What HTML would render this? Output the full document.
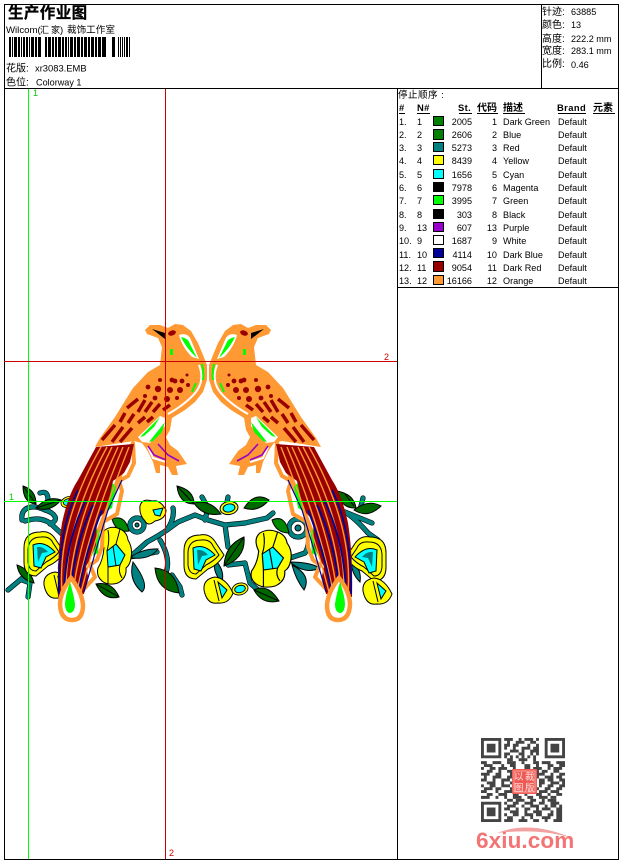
<!DOCTYPE html>
<html><head><meta charset="utf-8">
<style>
html,body{margin:0;padding:0;background:#fff;width:620px;height:860px;overflow:hidden}
svg{position:absolute;left:0;top:0;display:block}
text{font-family:"Liberation Sans","WenQuanYi Zen Hei","Noto Sans CJK SC",sans-serif;font-size:9.1px;fill:#000}
.r{text-anchor:end}
.b{font-weight:bold;letter-spacing:.4px;font-size:9.4px}
.c{font-size:10px}
</style></head><body>
<svg width="620" height="860" viewBox="0 0 620 860" xmlns="http://www.w3.org/2000/svg">
<defs>
<g id="fa" stroke="#000" stroke-width="1">
<path fill="#ff0" d="M24 548Q24 532 40 532Q50 530 56 540L64 552Q58 562 48 566L36 576Q24 576 24 562Z"/>
<path fill="none" d="M28 549Q29 537 41 537Q50 536 53 543L59 552Q54 558 46 562L36 571Q29 571 28 562Z"/>
<path fill="#0ff" d="M33 545Q44 540 55 552L46 557L41 568L34 566Z"/>
<path fill="#008080" stroke="none" d="M37 547Q43 546 48 552L42 553L38 562Z"/>
</g>
<g id="fb" stroke="#000" stroke-width="1">
<path fill="#ff0" d="M105 530Q112 525 120 529Q127 532 128 540Q133 548 131 558Q130 565 126 568Q127 578 118 583Q108 586 102 581Q96 576 98 568Q103 560 104 548Q99 536 105 530Z"/>
<path fill="#0ff" d="M107 551L116 544L125 555L120 565L108 567Z"/>
<path fill="none" d="M113 546L116 566M108 567Q108 575 108 584M120 565Q118 572 122 578M108 530Q110 540 107 551M120 529Q118 537 116 544"/>
</g>
<g id="fc" stroke="#000" stroke-width="1">
<path fill="#ff0" d="M204 590Q203 579 215 577Q226 578 233 593Q229 604 218 603Q207 605 204 590Z"/>
<path fill="#0ff" d="M218 582L227 590L222 598Z"/>
<path fill="none" d="M214 580L219 601"/>
</g>
<g id="bud" stroke="#000" stroke-width="1">
<ellipse cx="0" cy="0" rx="9" ry="6.5" fill="#ff0"/>
<ellipse cx="0" cy="0" rx="6" ry="4" fill="#0ff"/>
</g>
<g id="body">
<path fill="#f93" d="M145 330L150 325L160 325L168 328L175 324L183 325L191 331L198 343L203 355L207 365L207 380L203 392L195 402L185 410L172 418L170 430L166 437L170 445L178 451L187 464L176 466L178 475L172 475L168 467L160 465L160 473L156 473L153 462L147 450L142 443L134 441L95 447L100 438L115 417L133 388L148 372L160 365L162 347L158 338L147 334Z"/>
<path fill="#000" d="M152 329L165 333L165 339Z"/>
<ellipse cx="172" cy="333" rx="4" ry="2.5" fill="#900" transform="rotate(-20 172 333)"/>
<path fill="#fff" d="M179 335Q188 332 191 340L199 359L192 357Q182 347 179 335Z"/>
<path fill="#0f0" d="M181 337Q188 338 190 344L197 358Q186 348 181 337Z"/>
<path fill="#0f0" d="M170 349L173 349L173 355L170 355Z"/>
<path fill="none" stroke="#fff" stroke-width="2" d="M199 365Q205 380 196 392Q186 404 168 414"/>
<path fill="none" stroke="#0f0" stroke-width="2" d="M202 364Q204 372 203 380M196 383L192 392"/>
<path fill="#fff" d="M138 437L160 416L165 418L165 426L150 443L142 442Z"/>
<path fill="#0f0" d="M140 437L160 417L154 427L144 436ZM149 442L165 422L162 432L153 441Z"/>
<path fill="none" stroke="#fff" stroke-width="2" d="M148 447L153 458L166 462"/>
<path fill="none" stroke="#90c" stroke-width="1.6" d="M148 446L154 455L166 460M158 444L168 455L179 461"/>
<g fill="none" stroke="#900" stroke-width="3.500">
<path d="M102 440L115 425M112 442L123 427M120 442L132 428M120 422L125 413M128 423L134 414M138 423L145 417M147 422L153 417M127 408L138 399M138 412L145 400M145 412L152 402M153 412L160 404M163 410L170 405"/>
</g>
<g fill="#900">
<circle cx="148" cy="387" r="2.400"/><circle cx="158" cy="389" r="3.200"/><circle cx="170" cy="390" r="3"/><circle cx="180" cy="390" r="3"/><circle cx="175" cy="381" r="2.400"/><circle cx="182" cy="381" r="2.400"/><circle cx="160" cy="380" r="2"/><circle cx="172" cy="380" r="2.400"/><circle cx="188" cy="385" r="2"/><circle cx="167" cy="399" r="3"/><circle cx="155" cy="398" r="2.400"/><circle cx="145" cy="396" r="2"/><circle cx="177" cy="398" r="2"/><circle cx="187" cy="375" r="1.500"/>
</g>
</g>
<g id="tail">
<path fill="#fff" stroke="#f93" stroke-width="4" stroke-linejoin="round" d="M133 443L134 463L128 476L119 481L122 491L117 514L103 522L102 547L97 560L90 565L95 577L83 590L75 590Z"/>
<path fill="#0f0" d="M112 483L116 486L112 508L107 511ZM97 530L100 528L98 553L93 556Z"/>
<path fill="#900" d="M96 447L134 444L130 462L124 473L113 481L110 495L105 512L97 520L96 545L90 560L86 566L88 576L84 594L58 597Q57 555 62 523Q68 495 78 480Z"/>
<g fill="none" stroke="#f93" stroke-width="1.400">
<path d="M101 447Q57 525 62 592M107 447Q65 525 66 592M112 447Q73 525 69 592M118 447Q82 525 73 592M123 447Q90 525 77 592M129 447Q98 525 81 592"/>
</g>
<g fill="none" stroke="#009" stroke-width="1.800">
<path d="M78 490Q58 530 59 594M86 500Q66 540 64 592M93 505Q74 545 71 592M102 510Q86 550 79 590"/>
<path d="M122 480L108 510L96 550L84 592" stroke-width="1.200"/>
</g>
<path fill="#fff" stroke="#f93" stroke-width="4.500" d="M71 578Q60 592 60 605Q61 620 72 620Q83 620 83 605Q82 592 71 578Z"/>
<path fill="#0f0" d="M70 582Q65 597 65 605Q66 613 70 613Q75 612 75 604Q74 596 70 582Z"/>
</g>
</defs>

<!-- frame -->
<g fill="#000" shape-rendering="crispEdges">
<rect x="4" y="4" width="615" height="1"/>
<rect x="4" y="859" width="615" height="1"/>
<rect x="4" y="4" width="1" height="856"/>
<rect x="618" y="4" width="1" height="856"/>
<rect x="4" y="88" width="615" height="1"/>
<rect x="541" y="4" width="1" height="85"/>
<rect x="397" y="88" width="1" height="772"/>
<rect x="397" y="287" width="222" height="1"/>
</g>

<!-- header -->
<text x="8" y="18" style="font-size:15.500px;font-weight:bold;letter-spacing:.4px;stroke:#000;stroke-width:.3">生产作业图</text>
<text x="6" y="33" style="font-size:9.600px">Wilcom(</text>
<text x="40" y="33" style="font-size:9px">汇</text>
<text x="51" y="33" style="font-size:9px">家</text>
<text x="60" y="33" style="font-size:9.600px">)</text>
<text x="67" y="33" style="font-size:9.600px">裁饰工作室</text>
<path fill="#000" shape-rendering="crispEdges" d="M9 37h2v20h-2zM12 37h1v20h-1zM14 37h3v20h-3zM18 37h2v20h-2zM21 37h1v20h-1zM23 37h2v20h-2zM26 37h2v20h-2zM29 37h1v20h-1zM31 37h3v20h-3zM35 37h2v20h-2zM38 37h3v20h-3zM45 37h2v20h-2zM48 37h3v20h-3zM52 37h2v20h-2zM55 37h2v20h-2zM58 37h3v20h-3zM62 37h2v20h-2zM65 37h2v20h-2zM68 37h1v20h-1zM70 37h3v20h-3zM74 37h2v20h-2zM77 37h3v20h-3zM81 37h2v20h-2zM84 37h3v20h-3zM88 37h2v20h-2zM91 37h3v20h-3zM95 37h2v20h-2zM98 37h3v20h-3zM102 37h4v20h-4zM112 37h3v20h-3zM118 37h1v20h-1zM120 37h1v20h-1zM122 37h1v20h-1zM124 37h1v20h-1zM126 37h2v20h-2zM129 37h1v20h-1z"/>
<text x="6" y="71.500" class="c">花版:</text><text x="35" y="71.500" style="font-size:9.400px">xr3083.EMB</text>
<text x="6" y="85.500" class="c">色位:</text><text x="36" y="85.500" style="font-size:9.100px">Colorway 1</text>

<text x="542" y="15" class="c">针迹:</text><text x="571" y="15">63885</text>
<text x="542" y="28" class="c">颜色:</text><text x="571" y="28">13</text>
<text x="542" y="42" class="c">高度:</text><text x="571" y="42">222.2 mm</text>
<text x="542" y="54" class="c">宽度:</text><text x="571" y="54">283.1 mm</text>
<text x="542" y="67" class="c">比例:</text><text x="571" y="68">0.46</text>

<!-- table -->
<text x="398" y="98" style="font-size:9.500px;letter-spacing:.5px">停止顺序 :</text>
<g>
<text x="399" y="111" class="b">#</text>
<text x="417" y="111" class="b">N#</text>
<text x="458" y="111" class="b">St.</text>
<text x="477" y="111" class="c" style="font-weight:bold">代码</text>
<text x="503" y="111" class="c" style="font-weight:bold">描述</text>
<text x="557" y="111" class="b">Brand</text>
<text x="593" y="111" class="c" style="font-weight:bold">元素</text>
<path stroke="#000" fill="none" shape-rendering="crispEdges" d="M399 113.500h6M417 113.500h13M459 113.500h13M477 113.500h21M503 113.500h22M558 113.500h28M593 113.500h22"/>
</g>
<g stroke="#000" stroke-width="1" shape-rendering="crispEdges">
<rect x="433.500" y="116.500" width="10" height="9" fill="#008000"/>
<rect x="433.500" y="129.500" width="10" height="10" fill="#008000"/>
<rect x="433.500" y="142.500" width="10" height="9" fill="#008080"/>
<rect x="433.500" y="155.500" width="10" height="9" fill="#ff0"/>
<rect x="433.500" y="169.500" width="10" height="9" fill="#0ff"/>
<rect x="433.500" y="182.500" width="10" height="9" fill="#000"/>
<rect x="433.500" y="195.500" width="10" height="9" fill="#0f0"/>
<rect x="433.500" y="209.500" width="10" height="9" fill="#000"/>
<rect x="433.500" y="222.500" width="10" height="9" fill="#90c"/>
<rect x="433.500" y="235.500" width="10" height="9" fill="#fff"/>
<rect x="433.500" y="248.500" width="10" height="9" fill="#009"/>
<rect x="433.500" y="261.500" width="10" height="10" fill="#900"/>
<rect x="433.500" y="275.500" width="10" height="9" fill="#f93"/>
</g>
<g>
<text x="399" y="125">1.</text><text x="417" y="125">1</text><text x="472" y="125" class="r">2005</text><text x="497" y="125" class="r">1</text><text x="503" y="125">Dark Green</text><text x="558" y="125">Default</text>
<text x="399" y="138">2.</text><text x="417" y="138">2</text><text x="472" y="138" class="r">2606</text><text x="497" y="138" class="r">2</text><text x="503" y="138">Blue</text><text x="558" y="138">Default</text>
<text x="399" y="151">3.</text><text x="417" y="151">3</text><text x="472" y="151" class="r">5273</text><text x="497" y="151" class="r">3</text><text x="503" y="151">Red</text><text x="558" y="151">Default</text>
<text x="399" y="164">4.</text><text x="417" y="164">4</text><text x="472" y="164" class="r">8439</text><text x="497" y="164" class="r">4</text><text x="503" y="164">Yellow</text><text x="558" y="164">Default</text>
<text x="399" y="178">5.</text><text x="417" y="178">5</text><text x="472" y="178" class="r">1656</text><text x="497" y="178" class="r">5</text><text x="503" y="178">Cyan</text><text x="558" y="178">Default</text>
<text x="399" y="191">6.</text><text x="417" y="191">6</text><text x="472" y="191" class="r">7978</text><text x="497" y="191" class="r">6</text><text x="503" y="191">Magenta</text><text x="558" y="191">Default</text>
<text x="399" y="204">7.</text><text x="417" y="204">7</text><text x="472" y="204" class="r">3995</text><text x="497" y="204" class="r">7</text><text x="503" y="204">Green</text><text x="558" y="204">Default</text>
<text x="399" y="218">8.</text><text x="417" y="218">8</text><text x="472" y="218" class="r">303</text><text x="497" y="218" class="r">8</text><text x="503" y="218">Black</text><text x="558" y="218">Default</text>
<text x="399" y="231">9.</text><text x="417" y="231">13</text><text x="472" y="231" class="r">607</text><text x="497" y="231" class="r">13</text><text x="503" y="231">Purple</text><text x="558" y="231">Default</text>
<text x="399" y="244">10.</text><text x="417" y="244">9</text><text x="472" y="244" class="r">1687</text><text x="497" y="244" class="r">9</text><text x="503" y="244">White</text><text x="558" y="244">Default</text>
<text x="399" y="258">11.</text><text x="417" y="258">10</text><text x="472" y="258" class="r">4114</text><text x="497" y="258" class="r">10</text><text x="503" y="258">Dark Blue</text><text x="558" y="258">Default</text>
<text x="399" y="271">12.</text><text x="417" y="271">11</text><text x="472" y="271" class="r">9054</text><text x="497" y="271" class="r">11</text><text x="503" y="271">Dark Red</text><text x="558" y="271">Default</text>
<text x="399" y="284">13.</text><text x="417" y="284">12</text><text x="472" y="284" class="r">16166</text><text x="497" y="284" class="r">12</text><text x="503" y="284">Orange</text><text x="558" y="284">Default</text>
</g>

<!-- vines -->
<g fill="none" stroke="#000" stroke-width="5.200" stroke-linecap="round" stroke-linejoin="round">
<path d="M22 520C20 505 35 505 45 510C55 513 60 520 50 524M25 521C35 518 42 518 50 523L63 535M40 493Q48 490 48 500L45 507M8 590L26 575M22 580L30 583L28 597M130 557L147 542Q160 535 167 530Q175 518 173 508M167 530L178 522L195 515L208 520L225 525L245 523L267 518L273 513M225 525L228 547M130 557L157 552M160 540Q172 560 165 575M172 575L180 587L182 595M245 563L250 583L258 590M228 565L245 563M290 558L305 553Q310 545 308 535M202 497L208 508L205 520M228 497L226 508M345 512L372 523M345 512Q355 518 368 533L378 540M363 498L360 510"/>
<circle cx="137" cy="525" r="7"/><circle cx="298" cy="528" r="9"/>
</g>
<g fill="none" stroke="#008080" stroke-width="4" stroke-linecap="round" stroke-linejoin="round">
<path d="M22 520C20 505 35 505 45 510C55 513 60 520 50 524M25 521C35 518 42 518 50 523L63 535M40 493Q48 490 48 500L45 507M8 590L26 575M22 580L30 583L28 597M130 557L147 542Q160 535 167 530Q175 518 173 508M167 530L178 522L195 515L208 520L225 525L245 523L267 518L273 513M225 525L228 547M130 557L157 552M160 540Q172 560 165 575M172 575L180 587L182 595M245 563L250 583L258 590M228 565L245 563M290 558L305 553Q310 545 308 535M202 497L208 508L205 520M228 497L226 508M345 512L372 523M345 512Q355 518 368 533L378 540M363 498L360 510"/>
<circle cx="137" cy="525" r="7"/><circle cx="298" cy="528" r="9"/>
</g>
<circle cx="137" cy="525" r="2" fill="#008080" stroke="#000"/>
<circle cx="298" cy="528" r="3" fill="#008080" stroke="#000"/>
<path fill="#008080" stroke="#000" d="M132 556Q145 548 158 549Q150 560 132 558ZM133 562Q150 585 142 592Q128 580 133 562ZM290 562Q310 562 320 568Q305 575 290 562ZM292 565Q296 580 304 590Q312 575 292 565ZM60 560Q68 570 65 582Q55 572 60 560ZM215 560Q225 570 222 582Q212 572 215 560ZM352 560Q362 570 360 582Q350 572 352 560Z"/>

<!-- leaves -->
<g fill="#060" stroke="#000" stroke-width="1">
<path d="M23 486Q36 490 36 504Q23 503 23 486ZM36 508Q48 495 61 500Q50 513 36 508ZM17 565Q31 570 34 583Q19 579 17 565ZM96 584Q112 581 119 597Q104 601 96 584ZM155 568Q176 570 179 593Q157 591 155 568ZM177 486Q194 490 194 504Q179 504 177 486ZM194 503Q210 499 221 514Q203 517 194 503ZM244 508Q255 491 269 500Q258 513 244 508ZM224 566Q225 545 244 537Q246 558 224 566ZM254 590Q268 583 279 601Q262 605 254 590ZM337 491Q354 494 356 508Q341 509 337 491ZM354 510Q368 499 381 506Q368 519 354 510Z"/>
<path fill="#080" d="M112 519Q125 514 129 531Q116 533 112 519ZM272 520Q285 514 289 533Q276 533 272 520Z"/>
<path fill="none" d="M23 486L36 504M36 508L61 500M96 584L119 597M224 566L244 537M254 590L279 601M177 486L194 504M345 494L354 506"/>
</g>

<!-- flowers -->
<use href="#fc" transform="translate(-160 -5)"/>
<use href="#fa"/>
<use href="#fb"/>
<path fill="#ff0" stroke="#000" d="M140 506Q142 498 152 501Q160 499 166 510Q166 519 155 521Q148 527 145 521Q139 515 140 506Z"/>
<path fill="#0ff" stroke="#000" d="M153 510L163 508L160 516L155 515Z"/>
<use href="#fa" transform="translate(160 3)"/>
<use href="#fc"/>
<use href="#bud" transform="translate(229 508) rotate(-10)"/>
<use href="#bud" transform="translate(240 589) rotate(-15) scale(.9)"/>
<use href="#bud" transform="translate(68 502) rotate(-20) scale(.8)"/>
<use href="#fb" transform="translate(136 3) scale(1.18 1)"/>
<use href="#fa" transform="translate(410 5) scale(-1 1)"/>
<use href="#fc" transform="translate(159 1)"/>

<!-- birds -->
<use href="#tail"/>
<use href="#tail" transform="translate(410 0) scale(-1 1)"/>
<use href="#body"/>
<use href="#body" transform="translate(416 0) scale(-1 1)"/>

<!-- guide lines -->
<g shape-rendering="crispEdges">
<rect x="28" y="89" width="1" height="770" fill="#0f0"/>
<rect x="4" y="501" width="393" height="1" fill="#0f0"/>
<rect x="165" y="89" width="1" height="770" fill="#c00"/>
<rect x="4" y="361" width="393" height="1" fill="#c00"/>
</g>
<text x="33" y="96" style="fill:#0c0;font-size:9px">1</text>
<text x="9" y="500" style="fill:#0c0;font-size:9px">1</text>
<text x="384" y="360" style="fill:#c00;font-size:9px">2</text>
<text x="169" y="856" style="fill:#c00;font-size:9px">2</text>

<!-- QR -->
<svg x="481" y="738" width="84" height="84" viewBox="0 0 29 29">
<g style="filter:blur(.13px)">
<g fill="none" stroke="#444" stroke-width="1">
<path d="M8 .5h3m2 0h1m1 0h3m1 0h1M9 1.500h1m2 0h3m2 0h2M8 2.500h2m1 0h2m3 0h1m2 0h1M8 3.500h1m2 0h1m2 0h3m1 0h2M10 4.500h3m1 0h1m2 0h3M8 5.500h2m3 0h2m2 0h1m1 0h1M8 6.500h1m1 0h1m1 0h1m1 0h1m1 0h1m1 0h1M9 7.500h2m2 0h3m2 0h1"/>
<path d="M0 8.500h2m2 0h3m2 0h3m2 0h1m3 0h2m1 0h3m2 0h3M1 9.500h3m3 0h1m2 0h2m3 0h2m2 0h1m3 0h2m2 0h2M0 10.500h1m2 0h2m1 0h3m2 0h1m3 0h2m1 0h3m2 0h1m1 0h3M2 11.500h2m2 0h1m2 0h2m2 0h3m2 0h2m1 0h2m2 0h2M0 12.500h3m2 0h2m3 0h1m8 0h3m2 0h1m2 0h2M1 13.500h1m2 0h3m2 0h2m8 0h1m2 0h3m1 0h2M0 14.500h2m2 0h1m2 0h3m10 0h2m1 0h2m2 0h2M2 15.500h3m2 0h1m2 0h1m9 0h2m2 0h3m1 0h1M0 16.500h1m2 0h2m2 0h3m1 0h1m8 0h1m2 0h2m2 0h3M1 17.500h3m1 0h2m3 0h2m2 0h3m2 0h1m2 0h2m2 0h2M0 18.500h2m3 0h1m2 0h3m2 0h1m2 0h2m2 0h3m1 0h3M2 19.500h2m2 0h3m2 0h2m2 0h1m3 0h2m2 0h1m2 0h2M0 20.500h3m2 0h1m2 0h1m2 0h3m2 0h2m2 0h3m1 0h2"/>
<path d="M9 21.500h2m1 0h3m2 0h2m2 0h1m1 0h3M8 22.500h1m2 0h2m2 0h3m2 0h2m2 0h3M9 23.500h3m2 0h1m2 0h3m2 0h1m1 0h2m1 0h1M8 24.500h2m2 0h1m2 0h2m2 0h1m1 0h3m2 0h2M10 25.500h3m2 0h1m2 0h3m3 0h1m1 0h2M8 26.500h1m2 0h2m2 0h3m1 0h2m2 0h2m1 0h2M9 27.500h2m3 0h1m2 0h1m3 0h3m2 0h2M8 28.500h3m2 0h3m2 0h2m2 0h1m2 0h3"/>
</g>
<path fill="#444" fill-rule="evenodd" d="M0 0h7v7h-7zM1 1v5h5v-5zM2 2h3v3h-3zM22 0h7v7h-7zM23 1v5h5v-5zM24 2h3v3h-3zM0 22h7v7h-7zM1 23v5h5v-5zM2 24h3v3h-3z"/>
</g>
</svg>
<rect x="512" y="769" width="25" height="25" rx="1" fill="#ef5a55"/>
<rect x="514" y="771" width="21" height="21" fill="none" stroke="#fbd0cc" stroke-width=".6"/>
<text x="514" y="780" style="font-size:9.500px;fill:#fde0dc">以</text>
<text x="525" y="780" style="font-size:9.500px;fill:#fde0dc">裁</text>
<text x="514" y="791" style="font-size:9.500px;fill:#fde0dc">图</text>
<text x="525" y="791" style="font-size:9.500px;fill:#fde0dc">版</text>

<!-- logo -->
<path d="M497 833Q530 820 572 838Q540 828 497 833Z" fill="#f3a0a0"/>
<text x="476" y="848" style="font-size:22.500px;font-weight:bold;fill:#f27474;letter-spacing:.1px">6xiu.com</text>
</svg>
</body></html>
